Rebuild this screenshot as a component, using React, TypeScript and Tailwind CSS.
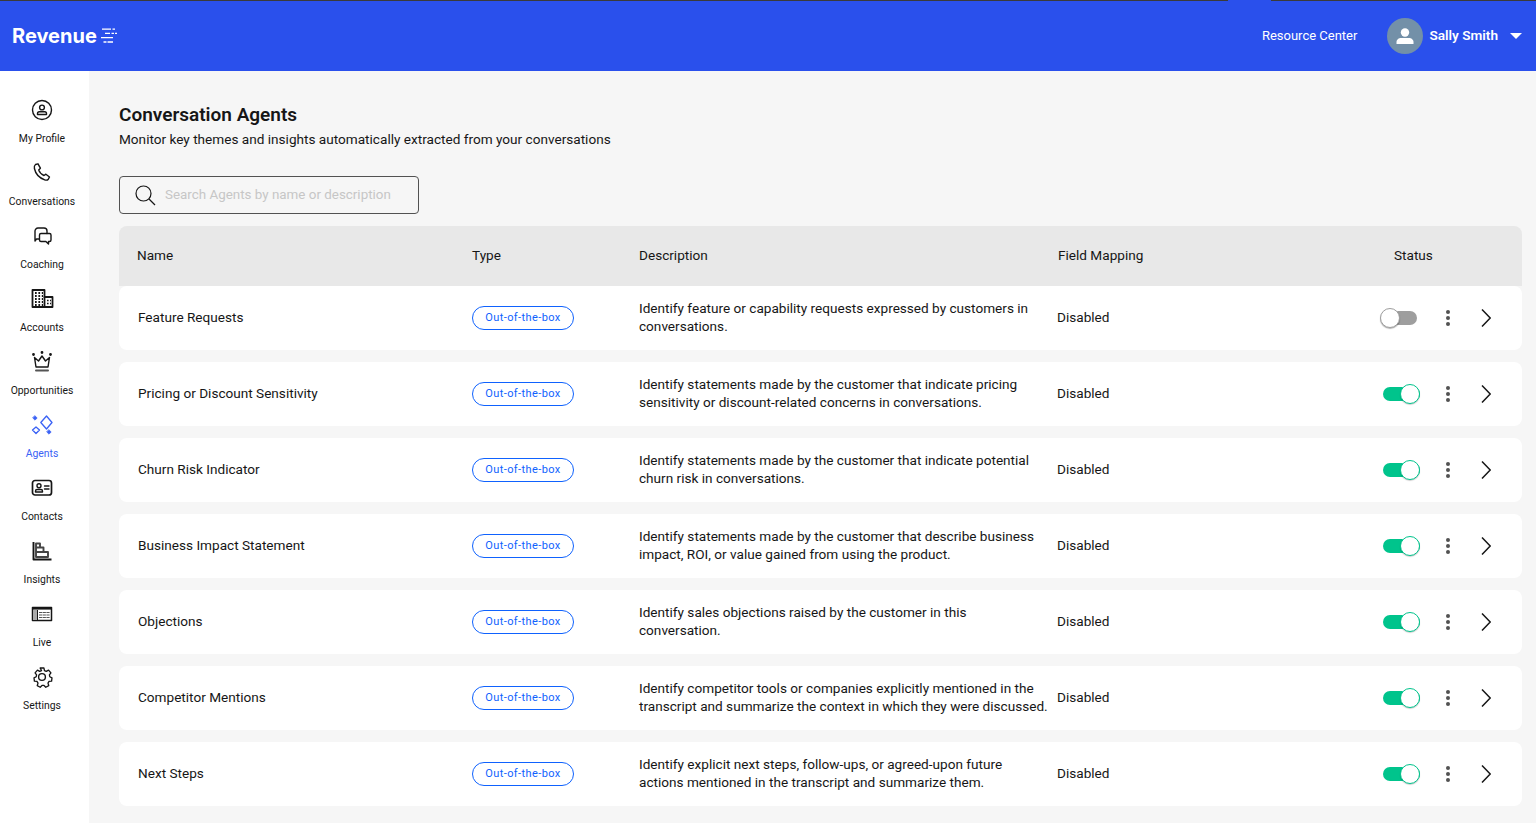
import { ReactNode } from "react";

const font = "font-['Roboto',sans-serif]";

const agents = [
  { name: "Feature Requests", on: false, desc: ["Identify feature or capability requests expressed by customers in", "conversations."] },
  { name: "Pricing or Discount Sensitivity", on: true, desc: ["Identify statements made by the customer that indicate pricing", "sensitivity or discount-related concerns in conversations."] },
  { name: "Churn Risk Indicator", on: true, desc: ["Identify statements made by the customer that indicate potential", "churn risk in conversations."] },
  { name: "Business Impact Statement", on: true, desc: ["Identify statements made by the customer that describe business", "impact, ROI, or value gained from using the product."] },
  { name: "Objections", on: true, desc: ["Identify sales objections raised by the customer in this", "conversation."] },
  { name: "Competitor Mentions", on: true, desc: ["Identify competitor tools or companies explicitly mentioned in the", "transcript and summarize the context in which they were discussed."] },
  { name: "Next Steps", on: true, desc: ["Identify explicit next steps, follow-ups, or agreed-upon future", "actions mentioned in the transcript and summarize them."] },
];

function Icon({ children }: { children: ReactNode }) {
  return (
    <svg width="24" height="24" viewBox="0 0 24 24" fill="none" stroke="currentColor" strokeWidth="1.4" strokeLinejoin="round" strokeLinecap="round">
      {children}
    </svg>
  );
}

const nav: { label: string; active?: boolean; icon: ReactNode }[] = [
  {
    label: "My Profile",
    icon: (
      <>
        <circle cx="12" cy="12" r="9.5" />
        <circle cx="12" cy="9.500" r="2.400" />
        <path d="M7.500 16.500v-1c0-1 .8-1.800 1.800-1.800h5.400c1 0 1.800.8 1.800 1.800v1z" />
      </>
    ),
  },
  {
    label: "Conversations",
    icon: <path d="M5.500 3.500 8 2.800l2.400 4.400-1.700 1.700c.8 2.600 2.600 4.400 5.300 5.600l1.900-1.300 3.600 2.800-1.200 2.200c-.8 1-2.200 1.100-3.600.6C9.500 17 5.500 12.500 4.400 7.500c-.3-1.700 0-3.200 1.100-4z" />,
  },
  {
    label: "Coaching",
    icon: (
      <>
        <path d="M9 15H6.500L5 17V7c0-1.600 1.300-3 3-3h6c1.700 0 3 1.400 3 3v2.500" />
        <path d="M11 9.500h8.500c.8 0 1.500.7 1.500 1.500v5c0 .8-.7 1.500-1.500 1.500h-1V20l-2.600-2.500H11c-.8 0-1.500-.7-1.500-1.500v-5c0-.8.7-1.500 1.500-1.500z" />
      </>
    ),
  },
  {
    label: "Accounts",
    icon: (
      <>
        <path d="M2.500 20V3h12v17z" strokeWidth="1.800" />
        <path d="M14.500 10h8v10h-8" strokeWidth="1.800" />
        <path strokeWidth="1.800" strokeLinecap="butt" strokeDasharray="1.700 1.700" d="M5 6h8M5 9h8M5 12h8M5 15h8M5 18h8" />
        <path strokeWidth="1.600" strokeLinecap="butt" strokeDasharray="1.600 1.400" d="M17 13.500h4M17 16.500h4" />
      </>
    ),
  },
  {
    label: "Opportunities",
    icon: (
      <>
        <path d="M4.500 7.500 8.500 11 12 6l3.500 5 4-3.500-1.500 9.500H6z" />
        <path d="M6 20.500h12" strokeWidth="2" stroke="#555" />
        <circle cx="3.500" cy="4.500" r=".7" fill="currentColor" />
        <circle cx="12" cy="2.500" r=".7" fill="currentColor" />
        <circle cx="20.500" cy="4.500" r=".7" fill="currentColor" />
      </>
    ),
  },
  {
    label: "Agents",
    active: true,
    icon: (
      <>
        <path d="M16.500 3 22 9.500 16.500 16 10.800 9.500z" strokeWidth="1.300" />
        <path d="M6 14 9.500 17 6 20.500 2.500 17z" strokeWidth="1.300" />
        <path d="M5 2.800 7.200 5 5 7.200 2.800 5zM19 16.800l2.200 2.200-2.200 2.200-2.200-2.200z" fill="currentColor" strokeWidth=".6" />
      </>
    ),
  },
  {
    label: "Contacts",
    icon: (
      <>
        <rect x="2.500" y="4.500" width="19" height="14.500" rx="2.500" strokeWidth="1.700" />
        <circle cx="9" cy="9.800" r="2" />
        <path d="M5.500 16v-.8c0-1 .8-1.700 1.500-1.700h4c.8 0 1.500.7 1.500 1.700v.8z" />
        <path d="M14.500 10h4.500M14.500 13h4.500" />
      </>
    ),
  },
  {
    label: "Insights",
    icon: (
      <>
        <path d="M3.500 3v17.500h18" strokeWidth="1.900" strokeLinecap="butt" />
        <path d="M6 4.500h4v4H6zM6 8.500h7.500v4.500H6zM6 13h12v5H6z" stroke="#444" strokeWidth="1.900" />
      </>
    ),
  },
  {
    label: "Live",
    icon: (
      <>
        <path d="M2.500 5.500h19v13h-19z" strokeWidth="1.500" strokeLinecap="butt" />
        <path d="M2.500 6.500h19" strokeWidth="2.200" strokeLinecap="butt" />
        <path d="M3 8h4v10H3z" fill="#aaa" stroke="none" />
        <path d="M7.500 8v10" strokeWidth="1" strokeLinecap="butt" />
        <path d="M9 10.500h11M9 13h11M9 15.500h11" stroke="#555" strokeWidth="1.100" strokeDasharray="3.200 .5" strokeLinecap="butt" />
      </>
    ),
  },
  {
    label: "Settings",
    icon: (
      <>
        <circle cx="12" cy="12" r="3.400" />
        <path d="M10 2.500h4l.6 2.700 1.900.9 2.400-1.400 2.500 2.900-1.600 2.100.4 2 2.300 1.200-.4 3.400-2.700.4-1.100 1.700.8 2.600-3.100 1.800-1.900-1.900-2.100 0-1.900 1.900-3.100-1.800.8-2.600-1.100-1.700-2.700-.4-.4-3.400 2.300-1.200.4-2-1.600-2.100 2.500-2.900 2.400 1.400 1.900-.9z" transform="translate(.6 .6) scale(.95)" />
      </>
    ),
  },
];

function Toggle({ on }: { on: boolean }) {
  if (on) {
    return (
      <div className="relative h-[14px] w-[37px] rounded-full bg-[#00c48c]">
        <div className="absolute right-0 top-[-3px] h-[20px] w-[20px] rounded-full border border-[#00c48c] bg-white shadow-[0_1px_1px_rgba(0,0,0,0.2)]" />
      </div>
    );
  }
  return (
    <div className="relative h-[14px] w-[35px] rounded-full bg-[#9e9e9e]">
      <div className="absolute left-[-2px] top-[-3px] h-[20px] w-[20px] rounded-full border border-[#9e9e9e] bg-white shadow-[0_1px_1px_rgba(0,0,0,0.3)]" />
    </div>
  );
}

function Row({ name, on, desc }: { name: string; on: boolean; desc: string[] }) {
  return (
    <div className="grid h-16 grid-cols-[334px_167px_418px_323px_1fr] items-center rounded-lg bg-white pl-[19px] text-[13.6px] text-[#161616]">
      <div className="pb-[2px]">{name}</div>
      <div>
        <span className="inline-flex h-6 w-[102px] items-center justify-center rounded-full border border-[#0f62fe] text-[11px] tracking-[0.4px] text-[#0f62fe]">
          Out-of-the-box
        </span>
      </div>
      <div className="pb-[2px] leading-[18px] whitespace-nowrap">
        {desc.map((d) => (
          <div key={d}>{d}</div>
        ))}
      </div>
      <div className="pb-[2px]">Disabled</div>
      <div className="flex items-center">
        <div className={on ? "ml-[3px] w-[55px]" : "ml-[2px] w-[56px]"}>
          <Toggle on={on} />
        </div>
        <div className="flex w-[20px] flex-col items-center gap-[2px]">
          <span className="h-[4px] w-[4px] rounded-full bg-[#525252]" />
          <span className="h-[4px] w-[4px] rounded-full bg-[#525252]" />
          <span className="h-[4px] w-[4px] rounded-full bg-[#525252]" />
        </div>
        <svg className="ml-[23px]" width="10" height="18" viewBox="0 0 10 18" fill="none" stroke="#161616" strokeWidth="1.500">
          <path d="M1 .5 9.200 9 1 17.500" />
        </svg>
      </div>
    </div>
  );
}

export default function App() {
  return (
    <div className={`${font} flex h-[823px] flex-col overflow-hidden bg-[#f6f6f6]`}>
      <header className="relative flex h-[71px] shrink-0 items-center border-t border-[#3a3a3a] bg-[#2a50ec] pl-3 text-white">
        <span className="absolute left-[1228px] top-[-1px] h-px w-[43px] bg-[#2a50ec]" />
        <span className="font-['Inter',sans-serif] text-[20px] font-bold leading-none">Revenue</span>
        <svg className="ml-[3px]" width="17" height="16" viewBox="0 0 17 16" fill="none" stroke="white" strokeWidth="1.300">
          <path d="M2 1.200h9M12.500 1.200h2.500M5 5.300h5M11.500 5.300h2.500M15 5.300h2M1 9.700h12M3.500 14h3M7.500 14h5.500" />
        </svg>
        <span className="ml-auto text-[13px]">Resource Center</span>
        <div className="ml-[30px] flex h-9 w-9 items-center justify-center rounded-full bg-[#7390a8]">
          <svg width="20" height="20" viewBox="0 0 20 20" fill="white">
            <circle cx="10" cy="6.500" r="4.200" />
            <path d="M1.500 18v-2c0-2.500 2.500-4 4.500-4h8c2 0 4.500 1.500 4.500 4v2z" />
          </svg>
        </div>
        <span className="ml-[6px] pb-[2px] text-[13.6px] font-semibold">Sally Smith</span>
        <svg className="ml-[12px] mr-[14px]" width="12" height="6" viewBox="0 0 12 6" fill="white">
          <path d="M0 0h12L6 6z" />
        </svg>
      </header>
      <div className="flex flex-1">
        <aside className="flex w-[89px] shrink-0 flex-col bg-white pr-[5px] pt-[27px]">
          {nav.map((n) => (
            <div key={n.label} className={`flex h-[63px] flex-col items-center ${n.active ? "text-[#3a62f5]" : "text-[#161616]"}`}>
              <Icon>{n.icon}</Icon>
              <span className="mt-[9px] text-[10.4px] leading-[16px]">{n.label}</span>
            </div>
          ))}
        </aside>
        <main className="flex-1 pl-[30px] pr-[14px] pt-[32px]">
          <h1 className="text-[19px] font-semibold leading-[24px] text-[#161616]">Conversation Agents</h1>
          <p className="mt-[2px] text-[13.6px] leading-[20px] text-[#161616]">
            Monitor key themes and insights automatically extracted from your conversations
          </p>
          <div className="mt-[27px] flex h-[38px] w-[300px] items-center rounded border border-[#525252] pl-[15px]">
            <svg width="21" height="21" viewBox="0 0 21 21" fill="none" stroke="#161616" strokeWidth="1.200">
              <circle cx="8.500" cy="8.500" r="7.500" />
              <path d="M14 14l6 6" />
            </svg>
            <span className="ml-[9px] text-[13.4px] text-[#c6c6c6]">Search Agents by name or description</span>
          </div>
          <div className="mt-3 grid h-[60px] grid-cols-[335px_167px_419px_336px_1fr] items-center rounded-t-lg bg-[#e8e8e8] pb-[2px] pl-[18px] text-[13.6px] text-[#161616]">
            <div>Name</div>
            <div>Type</div>
            <div>Description</div>
            <div>Field Mapping</div>
            <div>Status</div>
          </div>
          <div className="flex flex-col gap-3">
            {agents.map((a) => (
              <Row key={a.name} name={a.name} on={a.on} desc={a.desc} />
            ))}
          </div>
        </main>
      </div>
    </div>
  );
}
